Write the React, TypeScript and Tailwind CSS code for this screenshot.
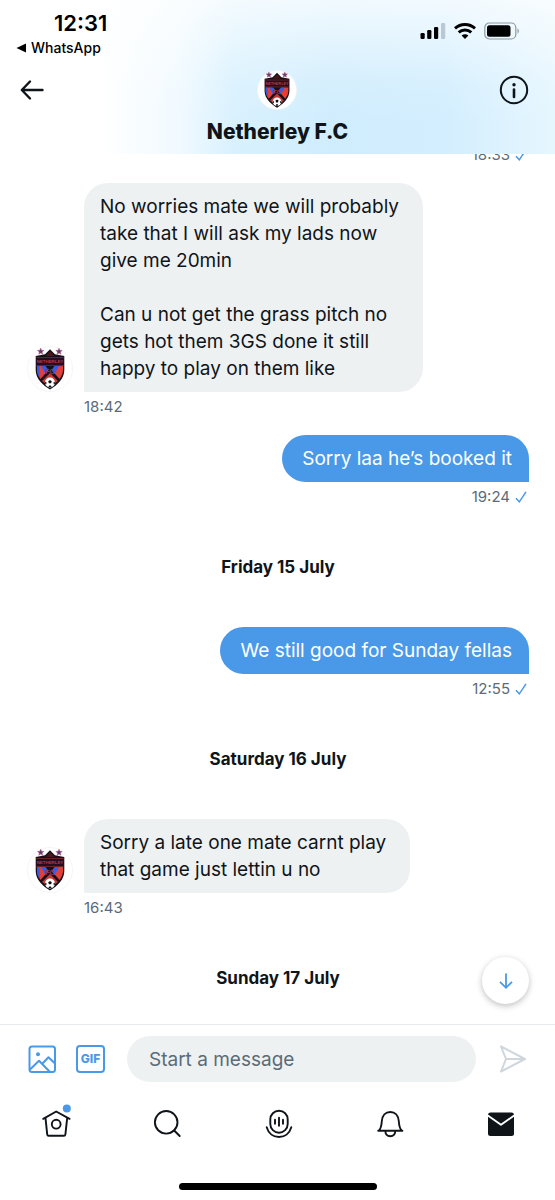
import { useState } from "react";

type Message = {
  id: number;
  text: string;
  time: string;
  mine: boolean;
};

type Day = {
  label: string;
  messages: Message[];
};

const EARLIER: Message[] = [
  {
    id: 1,
    text: "No worries mate we will probably\ntake that I will ask my lads now\ngive me 20min\n\nCan u not get the grass pitch no\ngets hot them 3GS done it still\nhappy to play on them like",
    time: "18:42",
    mine: false,
  },
  { id: 2, text: "Sorry laa he’s booked it", time: "19:24", mine: true },
];

const DAYS: Day[] = [
  {
    label: "Friday 15 July",
    messages: [{ id: 3, text: "We still good for Sunday fellas", time: "12:55", mine: true }],
  },
  {
    label: "Saturday 16 July",
    messages: [
      { id: 4, text: "Sorry a late one mate carnt play\nthat game just lettin u no", time: "16:43", mine: false },
    ],
  },
  { label: "Sunday 17 July", messages: [] },
];

function Crest({ className }: { className: string }) {
  return (
    <svg viewBox="0 0 46 46" className={className} aria-hidden="true">
      <circle cx="23" cy="23" r="22.5" fill="#fff" stroke="#f1f3f5" strokeWidth="0.8" />
      <path
        d="M13.7 2.2l.9 2.1 2.3.2-1.8 1.5.6 2.3-2-1.2-2 1.2.6-2.3-1.8-1.5 2.3-.2zM32 2.2l.9 2.1 2.3.2-1.8 1.5.6 2.3-2-1.2-2 1.2.6-2.3-1.8-1.5 2.3-.2z"
        fill="#5a3f7d"
        stroke="#c2556a"
        strokeWidth="0.5"
      />
      <path d="M23 3.3l5 5 9.300 1.700v14c0 9-7.300 15.300-14.300 19.500C16 39.300 8.700 33 8.700 24V10L18 8.300z" fill="#17101a" />
      <path d="M18.500 10L23 5l4.500 5z" fill="#4a1717" />
      <path d="M10 20h6.500l4 5-7 8c-2.300-3-3.500-6-3.500-9z" fill="#e04038" />
      <path d="M14 20h4.500l3 4-3 4z" fill="#3a5ae0" />
      <path d="M10 20h2.500v11.500c-1.700-2.500-2.500-5-2.500-8z" fill="#3a5ae0" />
      <path d="M36 20h-6.500l-4 5 7 8c2.300-3 3.500-6 3.500-9z" fill="#e04038" />
      <path d="M32 20h-4.500l-3 4 3 4z" fill="#3a5ae0" />
      <path d="M15 35l8-8 8 8-8 6z" fill="#c23a36" />
      <path d="M9.200 11.500h27.600v8H9.200z" fill="#221022" />
      <path d="M9.200 11.500h27.600M9.200 19.500h27.600" stroke="#8c2e2c" strokeWidth="0.7" />
      <text x="23" y="17.200" textAnchor="middle" fontSize="4.400" fontWeight="700" fill="#b03a48" fontFamily="Liberation Sans, sans-serif">
        NETHERLEY
      </text>
      <text x="23" y="27.500" textAnchor="middle" fontSize="7" fontWeight="700" fill="#9a3350" fontFamily="Liberation Sans, sans-serif">
        FC
      </text>
      <circle cx="23" cy="36.500" r="5" fill="#fff" />
      <path
        d="M21.200 35.200l1.800-1.300 1.800 1.300-.7 2.100h-2.200zM18.300 35.500l1.300 1-.5 2-1-.8zM27.700 35.500l-1.300 1 .5 2 1-.8zM21.500 41l.5-1.500h2l.5 1.500z"
        fill="#111"
      />
    </svg>
  );
}

function StatusIcons() {
  return (
    <div className="flex items-center gap-2">
      <svg width="26" height="18" viewBox="0 0 26 18" aria-hidden="true">
        <rect x="0.500" y="11" width="4.200" height="6" rx="1.200" />
        <rect x="7.200" y="8" width="4.200" height="9" rx="1.200" />
        <rect x="14" y="5" width="4.200" height="12" rx="1.200" />
        <rect x="21" y="1" width="4.200" height="16" rx="1.200" fill="#b9c9d3" />
      </svg>
      <svg width="22" height="18" viewBox="0 0 22 18" fill="none" stroke="#000" strokeWidth="2.900" aria-hidden="true">
        <path d="M1 6.400C6.500 1.200 15.500 1.200 21 6.400" />
        <path d="M4.700 10.400c3.600-3.300 9-3.300 12.600 0" />
        <path d="M11 17l-3.400-3.500c1.900-1.700 4.900-1.700 6.800 0z" fill="#000" stroke="none" />
      </svg>
      <svg width="36" height="18" viewBox="0 0 36 18" aria-hidden="true">
        <rect x="0.800" y="1" width="31" height="16" rx="4.500" fill="none" stroke="#8b989f" strokeWidth="1.200" />
        <rect x="3" y="3.200" width="23.500" height="11.600" rx="2.500" />
        <path d="M33.500 6.500c1.800.6 1.800 4.400 0 5z" fill="#8b989f" />
      </svg>
    </div>
  );
}

function Header() {
  return (
    <header className="relative z-10 shrink-0 bg-[linear-gradient(to_bottom,rgba(255,255,255,0.700)_0%,rgba(255,255,255,0.100)_55%,transparent_80%),linear-gradient(to_right,#fff_18%,#f1faff_32%,#d9f1fe_42%,#d0edfd_60%,#d3eefe_80%,#e6f6fe_100%)] pb-2">
      <div className="flex h-[62px] items-start justify-between pl-4 pr-[35px] pt-2">
        <div className="flex flex-col">
          <span className="pl-[38px] text-[22px] font-semibold leading-[30px] text-black">12:31</span>
          <a href="#whatsapp" className="flex items-center gap-1 text-[14px] font-medium leading-5 text-black">
            <svg width="11" height="10" viewBox="0 0 11 10" aria-hidden="true">
              <path d="M0.500 5L10 0.500v9z" />
            </svg>
            WhatsApp
          </a>
        </div>
        <div className="pt-[14px]">
          <StatusIcons />
        </div>
      </div>

      <div className="grid grid-cols-[1fr_auto_1fr] items-start px-[18px] pt-2">
        <button type="button" aria-label="Back" className="flex h-10 w-7 items-center">
          <svg width="28" height="24" viewBox="0 0 28 24" fill="none" stroke="#0f1419" strokeWidth="2.400" strokeLinecap="round" strokeLinejoin="round">
            <path d="M4 12h20.500M12 3.500L3.800 12l8.200 8.500" />
          </svg>
        </button>
        <div className="flex flex-col items-center">
          <Crest className="size-10" />
          <h1 className="mt-2 text-[21px] font-extrabold leading-7 text-[#0f1419]">Netherley F.C</h1>
        </div>
        <button type="button" aria-label="Conversation info" className="flex h-10 items-center justify-self-end pr-2">
          <svg width="30" height="30" viewBox="0 0 30 30" fill="none" stroke="#0f1419" strokeWidth="2">
            <circle cx="15" cy="15" r="13.200" />
            <circle cx="15" cy="9.800" r="1.700" fill="#0f1419" stroke="none" />
            <path d="M15 14.500v7.500" strokeWidth="2.600" strokeLinecap="round" />
          </svg>
        </button>
      </div>
    </header>
  );
}

function SentTime({ time }: { time: string }) {
  return (
    <div className="flex items-center justify-end gap-1 text-[15px] leading-5 text-[#5b6b78]">
      {time}
      <svg width="15" height="14" viewBox="0 0 15 14" fill="none" stroke="#4a99e9" strokeWidth="1.500" aria-label="Seen">
        <path d="M2 8.200l3.300 3.600L12 1.800" />
      </svg>
    </div>
  );
}

function Bubble({ message }: { message: Message }) {
  if (message.mine) {
    return (
      <div className="flex flex-col items-end gap-[5px]">
        <p className="whitespace-pre-line rounded-3xl rounded-br-none bg-[#4a99e9] py-[10px] pl-5 pr-[17px] text-[19px] leading-[27px] text-white">
          {message.text}
        </p>
        <SentTime time={message.time} />
      </div>
    );
  }
  return (
    <div className="grid grid-cols-[46px_1fr] gap-x-[11px] gap-y-[5px]">
      <Crest className="size-[46px] self-end" />
      <p className="justify-self-start whitespace-pre-line rounded-3xl rounded-bl-none bg-[#eef1f2] py-[10px] pl-4 pr-6 text-[19px] leading-[27px] text-[#0f1419]">
        {message.text}
      </p>
      <div className="col-start-2 text-[15px] leading-5 text-[#5b6b78]">{message.time}</div>
    </div>
  );
}

function Composer() {
  const [draft, setDraft] = useState("");

  return (
    <form className="flex items-center border-t border-[#e6eaed] px-7 pt-[11px]" onSubmit={(e) => e.preventDefault()}>
      <button type="button" aria-label="Add photo">
        <svg width="28" height="28" viewBox="0 0 28 28" fill="none" stroke="#4a99e9" strokeWidth="2" strokeLinejoin="round">
          <rect x="1.500" y="1.500" width="25.500" height="25.500" rx="2.500" />
          <circle cx="10" cy="9.200" r="2" fill="#4a99e9" stroke="none" />
          <path d="M2 24.500l9-8.800L22 27M14.500 18.500l6-6.300L27 18.500" />
        </svg>
      </button>
      <button
        type="button"
        className="ml-5 flex h-7 w-[29px] items-center justify-center rounded border-2 border-[#4a99e9] text-[12px] font-extrabold text-[#4a99e9]"
      >
        GIF
      </button>
      <input
        type="text"
        aria-label="Message"
        placeholder="Start a message"
        value={draft}
        onChange={(e) => setDraft(e.target.value)}
        className="ml-[22px] h-[46px] min-w-0 flex-1 rounded-full bg-[#eef1f2] px-[22px] text-[19px] text-[#0f1419] placeholder:text-[#5b6b78] focus:outline-none"
      />
      <button type="submit" aria-label="Send" className="ml-[23px]">
        <svg width="28" height="28" viewBox="0 0 28 28" fill="none" stroke="#cfd6dc" strokeWidth="2" strokeLinejoin="round">
          <path d="M2 1.500L26 14 2 26.500 7 14zM7 14h18" />
        </svg>
      </button>
    </form>
  );
}

function TabBar() {
  const cell = "flex h-14 flex-1 items-center justify-center";
  const line = {
    width: 30,
    height: 30,
    viewBox: "0 0 30 30",
    fill: "none",
    stroke: "#0f1419",
    strokeWidth: 1.9,
    strokeLinecap: "round" as const,
    strokeLinejoin: "round" as const,
    className: "overflow-visible",
  };

  return (
    <nav className="mt-[14px] flex">
      <a href="#home" aria-label="Home" className={cell}>
        <svg {...line}>
          <path d="M2.200 9.800L15.200 2.500l13.400 7.300M4.500 8.800l1.700 16.500c.1.900.6 1.400 1.500 1.400h15.200c.9 0 1.400-.5 1.500-1.400L26.200 8.800" />
          <circle cx="15.200" cy="15.200" r="4.400" />
          <circle cx="25.800" cy="-0.500" r="4" fill="#4a99e9" stroke="none" />
        </svg>
      </a>
      <a href="#search" aria-label="Search" className={cell}>
        <svg {...line}>
          <circle cx="14.200" cy="13.300" r="11.300" />
          <path d="M22.200 21.500l5.500 5.500" />
        </svg>
      </a>
      <a href="#spaces" aria-label="Spaces" className={cell}>
        <svg {...line}>
          <rect x="7.300" y="1.700" width="17.400" height="22" rx="8.700" />
          <path d="M3.700 18.200C5.500 24.500 10.500 28 16 28s10.500-3.500 12.300-9.800M12 10.700v4M16 8.700v8M20 10.700v4" />
        </svg>
      </a>
      <a href="#notifications" aria-label="Notifications" className={cell}>
        <svg {...line}>
          <path d="M4.200 21.700h24.200M5 21.500c2.100-2 2.500-5 2.800-9.200C8.200 6.500 11.500 3 16.300 3s8.100 3.500 8.500 9.300c.3 4.200.7 7.200 2.800 9.200M11.300 22c.2 3.200 2.200 5.200 5 5.200s4.800-2 5-5.200" />
        </svg>
      </a>
      <a href="#messages" aria-label="Messages" className={cell}>
        <svg {...line}>
          <rect x="3" y="3.500" width="26" height="23.500" rx="2.500" fill="#0f1419" stroke="none" />
          <path d="M2.800 6.500L16 15.800l13.200-9.300" stroke="#fff" />
        </svg>
      </a>
    </nav>
  );
}

export default function App() {
  return (
    <div className="flex h-screen flex-col bg-white font-['Inter',sans-serif]">
      <Header />

      <main className="relative min-h-0 flex-1">
        <div className="flex h-full flex-col justify-end overflow-hidden pb-[34px] pl-[27px] pr-[26px]">
          <div className="flex flex-col gap-[18px]">
            <SentTime time="18:33" />
            {EARLIER.map((m) => (
              <Bubble key={m.id} message={m} />
            ))}
          </div>
          {DAYS.map((day) => (
            <section key={day.label}>
              <h2 className="mt-12 text-center text-[17px] font-bold leading-6 text-[#0f1419]">{day.label}</h2>
              {day.messages.map((m) => (
                <div key={m.id} className="mt-12">
                  <Bubble message={m} />
                </div>
              ))}
            </section>
          ))}
        </div>
        <button
          type="button"
          aria-label="Jump to latest"
          className="absolute bottom-5 right-[26px] flex size-[47px] items-center justify-center rounded-full bg-white shadow-[0_2px_6px_rgba(0,0,0,0.250)]"
        >
          <svg width="16" height="18" viewBox="0 0 16 18" fill="none" stroke="#4a99e9" strokeWidth="1.800">
            <path d="M8 1.500v14M2 9.800l6 6 6-6" />
          </svg>
        </button>
      </main>

      <footer className="shrink-0 pb-[10px]">
        <Composer />
        <TabBar />
        <div className="mx-auto mt-[31px] h-[7px] w-[198px] rounded-full bg-black" />
      </footer>
    </div>
  );
}
